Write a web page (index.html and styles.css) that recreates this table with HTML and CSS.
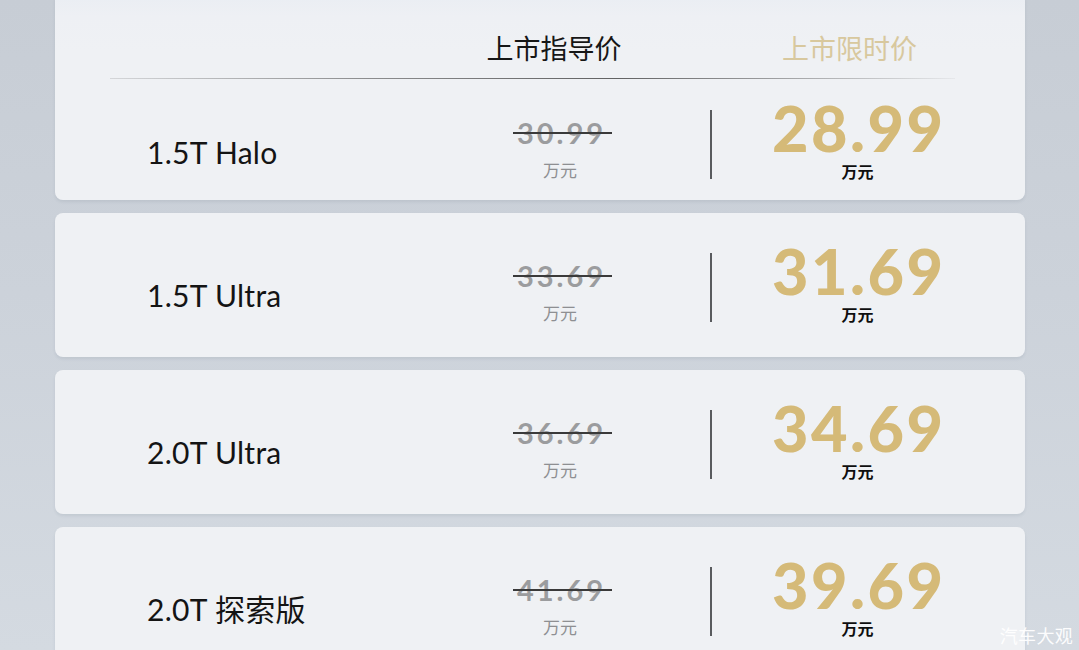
FILE: index.html
```html
<!DOCTYPE html>
<html lang="zh-CN">
<head>
<meta charset="utf-8">
<title>价格表</title>
<link rel="stylesheet" href="styles.css">
</head>
<body>
<main class="page">
  <section class="card card-first">
    <div class="head">
      <div class="head-guide">上市指导价</div>
      <div class="head-limit">上市限时价</div>
    </div>
    <div class="rule"></div>
    <div class="row row-first">
      <div class="name">1.5T Halo</div>
      <div class="old"><span class="old-num">30.99</span><span class="old-unit">万元</span></div>
      <div class="spacer"></div>
      <div class="vline"></div>
      <div class="new"><span class="new-num">28.99</span><span class="new-unit">万元</span></div>
    </div>
  </section>
  <section class="card">
    <div class="row">
      <div class="name">1.5T Ultra</div>
      <div class="old"><span class="old-num">33.69</span><span class="old-unit">万元</span></div>
      <div class="spacer"></div>
      <div class="vline"></div>
      <div class="new"><span class="new-num">31.69</span><span class="new-unit">万元</span></div>
    </div>
  </section>
  <section class="card">
    <div class="row">
      <div class="name">2.0T Ultra</div>
      <div class="old"><span class="old-num">36.69</span><span class="old-unit">万元</span></div>
      <div class="spacer"></div>
      <div class="vline"></div>
      <div class="new"><span class="new-num">34.69</span><span class="new-unit">万元</span></div>
    </div>
  </section>
  <section class="card">
    <div class="row">
      <div class="name">2.0T 探索版</div>
      <div class="old"><span class="old-num">41.69</span><span class="old-unit">万元</span></div>
      <div class="spacer"></div>
      <div class="vline"></div>
      <div class="new"><span class="new-num">39.69</span><span class="new-unit">万元</span></div>
    </div>
  </section>
</main>
<div class="watermark">汽车大观</div>
</body>
</html>
```

FILE: styles.css
```css
html, body {
  margin: 0;
  padding: 0;
}

body {
  width: 1079px;
  height: 650px;
  overflow: hidden;
  position: relative;
  font-family: "Lato", "Noto Sans CJK SC", sans-serif;
  background: linear-gradient(180deg, #c7cdd5 0%, #ccd2da 45%, #d4dae1 100%);
}

.page {
  display: flex;
  flex-direction: column;
  gap: 13px;
  padding: 0 54px 0 55px;
  margin-top: -8px;
}

.card {
  background: #eff1f4;
  border-radius: 8px;
  box-shadow: 0 2px 3px rgba(90, 105, 125, 0.12);
  height: 144px;
  display: flex;
  flex-direction: column;
  flex-shrink: 0;
}

.card-first {
  height: 208px;
  background: linear-gradient(180deg, #e9edf3 0px, #eef0f4 24px, #eff1f4 60px);
}

.head {
  display: grid;
  grid-template-columns: 1fr 200px 50px 2px 291px;
  padding: 38px 22px 0 92px;
  height: 86px;
  box-sizing: border-box;
  font-family: "Noto Sans CJK SC", sans-serif;
  font-size: 27px;
  line-height: 36px;
  flex-shrink: 0;
}

.head-guide {
  grid-column: 2;
  text-align: center;
  color: #161616;
  padding-right: 12px;
}

.head-limit {
  grid-column: 5;
  text-align: center;
  color: #d8c89e;
  padding-right: 16px;
}

.rule {
  height: 1px;
  flex-shrink: 0;
  margin: 0 70px 0 55px;
  background: linear-gradient(90deg, rgba(60, 60, 60, 0.15) 0%, rgba(60, 60, 60, 0.55) 30%, rgba(50, 50, 50, 0.75) 60%, rgba(60, 60, 60, 0.25) 90%, rgba(60, 60, 60, 0.05) 100%);
}

.row {
  flex: 1;
  display: grid;
  grid-template-columns: 1fr 200px 50px 2px 291px;
  align-items: end;
  padding: 0 22px 34px 92px;
}

.row-first {
  padding-bottom: 20px;
}

.name {
  font-size: 30px;
  line-height: 36px;
  color: #141414;
  margin-bottom: 10px;
  letter-spacing: 0.3px;
}

.old,
.new {
  display: flex;
  flex-direction: column;
  align-items: center;
}

.old-num {
  position: relative;
  font-size: 29px;
  line-height: 30px;
  font-weight: 700;
  color: #9b9c9e;
  letter-spacing: 3px;
  margin-right: -3px;
  margin-bottom: 12px;
}

.old-num::after {
  content: "";
  position: absolute;
  left: -4px;
  right: -6px;
  top: 14px;
  height: 2px;
  background: #3a3a3a;
}

.old-unit {
  font-family: "Noto Sans CJK SC", sans-serif;
  font-size: 17px;
  line-height: 20px;
  color: #8e8f92;
}

.vline {
  width: 2px;
  height: 69px;
  background: #595b5e;
  margin-bottom: 1px;
}

.new-num {
  font-size: 63px;
  line-height: 50px;
  font-weight: 900;
  color: #d5ba78;
  letter-spacing: 2.5px;
  margin-right: -2.5px;
  margin-bottom: 9px;
}

.new-unit {
  font-family: "Noto Sans CJK SC", sans-serif;
  font-size: 16px;
  line-height: 18px;
  font-weight: 700;
  color: #0e0e0e;
}

.watermark {
  position: absolute;
  right: 6px;
  bottom: 4px;
  font-family: "Noto Sans CJK SC", sans-serif;
  font-size: 18px;
  line-height: 22px;
  color: rgba(255, 255, 255, 0.95);
  letter-spacing: 0.3px;
}
```
